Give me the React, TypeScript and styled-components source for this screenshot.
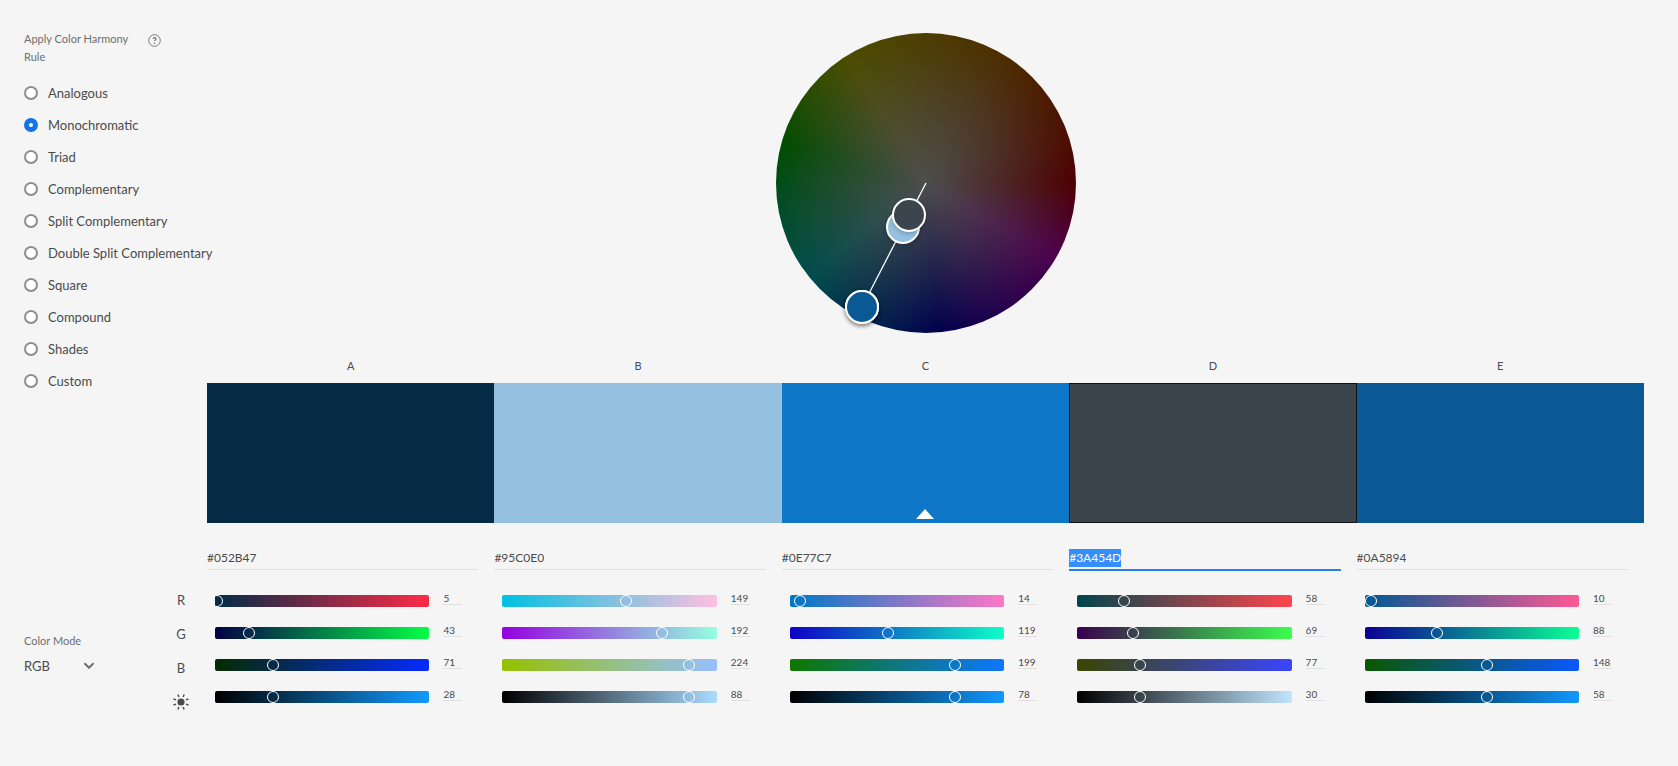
import React, { useState } from "react";
import styled, { createGlobalStyle } from "styled-components";

const GlobalStyle = createGlobalStyle`
  *, *::before, *::after { box-sizing: border-box; }
  body {
    margin: 0;
    background: #f5f5f5;
    color: #4b4b4b;
    font-family: Lato, "Noto Sans", sans-serif;
  }
  button, input, select { font-family: inherit; color: inherit; }
`;

type RGB = [number, number, number];
type Swatch = { id: string; hex: string; rgb: RGB; brightness: number };

const RULES = [
  "Analogous",
  "Monochromatic",
  "Triad",
  "Complementary",
  "Split Complementary",
  "Double Split Complementary",
  "Square",
  "Compound",
  "Shades",
  "Custom",
];

const SWATCHES: Swatch[] = [
  { id: "A", hex: "#052B47", rgb: [5, 43, 71], brightness: 28 },
  { id: "B", hex: "#95C0E0", rgb: [149, 192, 224], brightness: 88 },
  { id: "C", hex: "#0E77C7", rgb: [14, 119, 199], brightness: 78 },
  { id: "D", hex: "#3A454D", rgb: [58, 69, 77], brightness: 30 },
  { id: "E", hex: "#0A5894", rgb: [10, 88, 148], brightness: 58 },
];

const CHANNELS = ["Red", "Green", "Blue"];
const BASE = 2;
const ACTIVE = 3;

/* Marker offsets from the wheel centre, back to front. */
const MARKERS = [
  { id: "A", x: -64, y: 124 },
  { id: "C", x: -64, y: 124 },
  { id: "E", x: -64, y: 124 },
  { id: "B", x: -23, y: 44 },
  { id: "D", x: -17, y: 32 },
];

const css = ([r, g, b]: RGB) => `rgb(${r}, ${g}, ${b})`;

const channelGradient = (rgb: RGB, channel: number) => {
  const low = [...rgb] as RGB;
  const high = [...rgb] as RGB;
  low[channel] = 0;
  high[channel] = 255;
  return `linear-gradient(to right, ${css(low)}, ${css(high)})`;
};

const brightnessGradient = (rgb: RGB) => {
  const scale = 255 / Math.max(...rgb);
  return `linear-gradient(to right, #000, ${css(rgb.map((v) => Math.round(v * scale)) as RGB)})`;
};

const Page = styled.div`
  display: grid;
  grid-template-columns: 173px minmax(0, 1fr);
  padding: 30px 34px 48px 24px;
`;

const Sidebar = styled.aside`
  display: flex;
  flex-direction: column;
`;

const Harmony = styled.fieldset`
  margin: 0;
  padding: 0;
  border: 0;
  min-width: 0;
`;

const HarmonyHead = styled.div`
  display: flex;
  align-items: flex-start;
  gap: 8px;
  margin-bottom: 11px;
`;

const SmallLabel = styled.span`
  font-size: 11px;
  line-height: 18px;
  color: #6e6e6e;
`;

const HarmonyTitle = styled(SmallLabel)`
  width: 116px;
`;

const HelpButton = styled.button`
  display: flex;
  margin: 4px 0 0;
  padding: 0;
  border: 0;
  background: none;
`;

const Rule = styled.label`
  display: flex;
  align-items: center;
  gap: 10px;
  height: 32px;
  font-size: 13px;
  white-space: nowrap;
`;

const Radio = styled.input`
  appearance: none;
  flex: none;
  width: 14px;
  height: 14px;
  margin: 0;
  border: 2px solid #8e8e8e;
  border-radius: 50%;
  background: #fff;

  &:checked {
    border: 5px solid #1473e6;
  }
`;

const Mode = styled.label`
  display: flex;
  flex-direction: column;
  align-items: flex-start;
  margin-top: 235px;
`;

const SelectWrap = styled.span`
  display: grid;
  align-items: center;
  width: 71px;

  > * { grid-area: 1 / 1; }
  > svg { justify-self: end; pointer-events: none; }
`;

const ModeSelect = styled.select`
  appearance: none;
  width: 100%;
  height: 32px;
  padding: 0;
  border: 0;
  background: transparent;
  font-size: 13px;
`;

const Main = styled.main`
  display: grid;
  grid-template-columns: 10px minmax(0, 1fr);
  padding-top: 3px;
`;

const Wheel = styled.div`
  grid-column: 2;
  position: relative;
  justify-self: center;
  width: 300px;
  height: 300px;
  border-radius: 50%;
  background:
    radial-gradient(closest-side, #4d4d4d, rgba(77, 77, 77, 0)),
    conic-gradient(
      from 90deg,
      #4d0000 0deg,
      #4d004d 30deg,
      #00004d 85deg,
      #004d4d 142deg,
      #004d00 195deg,
      #4d4d00 238deg,
      #4d2d00 300deg,
      #4d0000 360deg
    );
`;

const Spoke = styled.svg`
  display: block;
`;

const Marker = styled.button<{ $color: string }>`
  position: absolute;
  width: 34px;
  height: 34px;
  padding: 0;
  border: 2px solid #fff;
  border-radius: 50%;
  background: ${(p) => p.$color};
  box-shadow: 0 2px 4px rgba(0, 0, 0, 0.2);
  transform: translate(-50%, -50%);
`;

const Columns = styled.div`
  grid-column: 2;
  display: grid;
  grid-template-columns: repeat(5, minmax(0, 1fr));
`;

const Letters = styled(Columns)`
  margin-top: 22px;
  font-size: 11px;
  line-height: 22px;
  text-align: center;
`;

const Chip = styled.button<{ $color: string; $active: boolean }>`
  display: flex;
  align-items: flex-end;
  justify-content: center;
  height: 140px;
  margin: 0;
  padding: 0 0 4px;
  border: 0;
  background: ${(p) => p.$color};
  box-shadow: ${(p) => (p.$active ? "inset 0 0 0 1px #111" : "none")};
`;

const ChipRow = styled(Columns)`
  margin-top: 6px;
`;

const HexRow = styled(Columns)`
  margin-top: 26px;
`;

const HexField = styled.div<{ $active: boolean }>`
  height: ${(p) => (p.$active ? 22 : 21)}px;
  margin-right: 16px;
  border-bottom: ${(p) => (p.$active ? "2px solid #2680eb" : "1px solid #e1e1e1")};
`;

const HexCell = styled.div`
  height: 22px;
`;

const HexInput = styled.input<{ $active: boolean }>`
  display: block;
  field-sizing: content;
  height: 18px;
  padding: 0;
  border: 0;
  outline: 0;
  font-size: 12px;
  line-height: 18px;
  background: ${(p) => (p.$active ? "#338fff" : "transparent")};
  color: ${(p) => (p.$active ? "#fff" : "#4b4b4b")};
`;

const Controls = styled.div`
  grid-column: 1 / -1;
  display: grid;
  grid-template-columns: subgrid;
  margin-top: 14px;
`;

const Legend = styled.div`
  display: flex;
  flex-direction: column;
  align-items: center;
  gap: 2px;
  width: 18px;
  margin: -1px 0 0 -25px;
  font-size: 13px;
`;

const LegendItem = styled.span`
  display: flex;
  align-items: center;
  height: 32px;
`;

const Sliders = styled.div`
  display: flex;
  flex-direction: column;
  padding: 0 32px 0 8px;
`;

const SliderRow = styled.div`
  display: flex;
  align-items: center;
  gap: 14px;
  height: 32px;
`;

const Track = styled.div<{ $fill: string }>`
  flex: 1;
  min-width: 0;
  height: 12px;
  border-radius: 2px;
  background: ${(p) => p.$fill};
`;

const Range = styled.input`
  appearance: none;
  display: block;
  width: calc(100% + 12px);
  height: 12px;
  margin: 0 0 0 -8px;
  background: transparent;

  &::-webkit-slider-thumb {
    appearance: none;
    width: 12px;
    height: 12px;
    border: 1px solid #fff;
    border-radius: 50%;
    background: transparent;
  }
`;

const ValueInput = styled.input`
  flex: none;
  width: 19px;
  height: 14px;
  margin-bottom: 6px;
  padding: 0;
  border: 0;
  border-bottom: 1px solid #e1e1e1;
  background: transparent;
  font-size: 10px;
  line-height: 13px;
`;

const HelpIcon = () => (
  <svg width="13" height="13" viewBox="0 0 13 13" fill="none" stroke="#6e6e6e" aria-hidden="true">
    <circle cx="6.5" cy="6.5" r="5.8" strokeWidth="0.9" />
    <path d="M5 4.9c.1-.8.7-1.3 1.6-1.3.9 0 1.5.5 1.5 1.2 0 1.1-1.5 1.1-1.5 2.5" strokeWidth="1.1" />
    <circle cx="6.6" cy="9.2" r=".7" fill="#6e6e6e" stroke="none" />
  </svg>
);

const ChevronIcon = () => (
  <svg width="12" height="8" viewBox="0 0 12 8" fill="none" aria-hidden="true">
    <path d="M2 1.8 6 5.8 10 1.8" stroke="#6e6e6e" strokeWidth="2" strokeLinecap="round" strokeLinejoin="round" />
  </svg>
);

const SunIcon = () => (
  <svg width="18" height="18" viewBox="-9 -9 18 18" role="img" aria-label="Brightness">
    <circle r="3.6" fill="#4b4b4b" />
    {[22.5, 67.5, 112.5, 157.5, 202.5, 247.5, 292.5, 337.5].map((angle) => (
      <path key={angle} d="M0-5.4V-8.2" stroke="#4b4b4b" strokeWidth="1.4" transform={`rotate(${angle})`} />
    ))}
  </svg>
);

const BaseArrow = () => (
  <svg width="18" height="10" viewBox="0 0 18 10" aria-hidden="true">
    <path d="M9 0 18 10H0Z" fill="#fff" />
  </svg>
);

type SliderProps = { name: string; value: number; max: number; fill: string };

const Slider = ({ name, value, max, fill }: SliderProps) => {
  const [current, setCurrent] = useState(value);
  const update = (e: React.ChangeEvent<HTMLInputElement>) => setCurrent(Number(e.target.value) || 0);
  return (
    <SliderRow>
      <Track $fill={fill}>
        <Range type="range" min={0} max={max} value={current} onChange={update} aria-label={name} />
      </Track>
      <ValueInput type="text" value={current} onChange={update} aria-label={`${name} value`} />
    </SliderRow>
  );
};

export default function App() {
  const [rule, setRule] = useState("Monochromatic");
  return (
    <>
      <GlobalStyle />
      <Page>
        <Sidebar>
          <Harmony aria-labelledby="harmony-title">
            <HarmonyHead>
              <HarmonyTitle id="harmony-title">Apply Color Harmony Rule</HarmonyTitle>
              <HelpButton type="button" aria-label="Help">
                <HelpIcon />
              </HelpButton>
            </HarmonyHead>
            {RULES.map((name) => (
              <Rule key={name}>
                <Radio type="radio" name="rule" checked={rule === name} onChange={() => setRule(name)} />
                {name}
              </Rule>
            ))}
          </Harmony>
          <Mode>
            <SmallLabel>Color Mode</SmallLabel>
            <SelectWrap>
              <ModeSelect defaultValue="RGB">
                <option>RGB</option>
                <option>CMYK</option>
                <option>LAB</option>
                <option>HSB</option>
              </ModeSelect>
              <ChevronIcon />
            </SelectWrap>
          </Mode>
        </Sidebar>

        <Main>
          <Wheel>
            <Spoke width="300" height="300" viewBox="0 0 300 300" aria-hidden="true">
              <path d="M150 150 86 274" stroke="#fff" strokeWidth="1.3" />
            </Spoke>
            {MARKERS.map((m) => (
              <Marker
                key={m.id}
                type="button"
                aria-label={`Color ${m.id}`}
                $color={SWATCHES.find((s) => s.id === m.id)!.hex}
                style={{ left: 150 + m.x, top: 150 + m.y }}
              />
            ))}
          </Wheel>

          <Letters>
            {SWATCHES.map((s) => (
              <span key={s.id}>{s.id}</span>
            ))}
          </Letters>
          <ChipRow>
            {SWATCHES.map((s, i) => (
              <Chip key={s.id} type="button" aria-label={`Swatch ${s.id}`} $color={s.hex} $active={i === ACTIVE}>
                {i === BASE && <BaseArrow />}
              </Chip>
            ))}
          </ChipRow>
          <HexRow>
            {SWATCHES.map((s, i) => (
              <HexCell key={s.id}>
                <HexField $active={i === ACTIVE}>
                  <HexInput type="text" defaultValue={s.hex} aria-label={`Hex ${s.id}`} $active={i === ACTIVE} />
                </HexField>
              </HexCell>
            ))}
          </HexRow>

          <Controls>
            <Legend>
              <LegendItem>R</LegendItem>
              <LegendItem>G</LegendItem>
              <LegendItem>B</LegendItem>
              <LegendItem>
                <SunIcon />
              </LegendItem>
            </Legend>
            <Columns>
              {SWATCHES.map((s) => (
                <Sliders key={s.id}>
                  {CHANNELS.map((name, c) => (
                    <Slider
                      key={name}
                      name={`${name} ${s.id}`}
                      value={s.rgb[c]}
                      max={255}
                      fill={channelGradient(s.rgb, c)}
                    />
                  ))}
                  <Slider
                    name={`Brightness ${s.id}`}
                    value={s.brightness}
                    max={100}
                    fill={brightnessGradient(s.rgb)}
                  />
                </Sliders>
              ))}
            </Columns>
          </Controls>
        </Main>
      </Page>
    </>
  );
}
